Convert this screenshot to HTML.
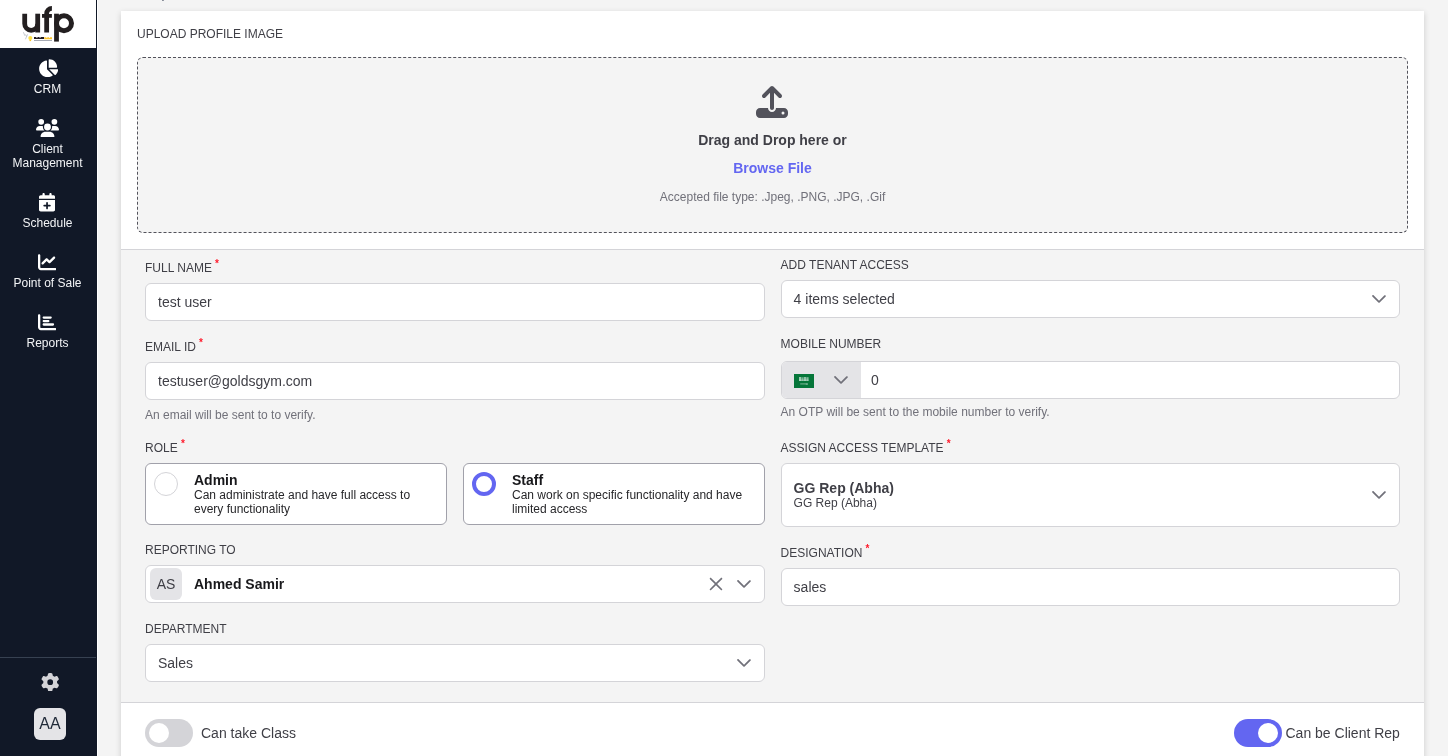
<!DOCTYPE html>
<html>
<head>
<meta charset="utf-8">
<title>Edit User</title>
<style>
*{box-sizing:border-box;margin:0;padding:0}
html,body{width:1448px;height:756px;overflow:hidden}
body{font-family:"Liberation Sans",sans-serif;background:#f4f4f4;color:#374151;position:relative}
.abs{position:absolute}
/* sidebar */
#side{position:absolute;left:0;top:0;width:97px;height:756px;background:#111827}
#sideline{position:absolute;left:97px;top:0;width:1px;height:756px;background:#fff}
#logo{position:absolute;left:0;top:0;width:96px;height:48px;background:#fff}
.nav{position:absolute;left:0;width:96px;text-align:center;color:#f3f4f6;font-size:12px;line-height:14px}
.nav svg{position:absolute;fill:#fff}
.navtxt{position:absolute;left:0;width:95px;text-align:center;color:#f3f4f6;font-size:12px;line-height:14px}
#sidehr{position:absolute;left:0;top:657px;width:96px;height:1px;background:#374151}
#avatar{position:absolute;left:34px;top:708px;width:32px;height:32px;border-radius:6px;background:#e4e4e7;color:#1f2937;font-size:16px;line-height:32px;text-align:center}
/* card */
#card{position:absolute;left:121px;top:11px;width:1303px;height:760px;background:#fff;box-shadow:0 2px 6px rgba(0,0,0,.17)}
#graysec{position:absolute;left:121px;top:249px;width:1303px;height:454px;background:#f4f4f4;border-top:1px solid #d4d4d8;border-bottom:1px solid #d4d4d8}
.lbl{position:absolute;font-size:12px;line-height:14px;color:#3f3f46;white-space:nowrap}
.lbl i{font-style:normal;color:#ff1a2b;position:relative;top:-5px;left:3.2px;font-size:10px;font-weight:bold}
.inp{position:absolute;height:38px;background:#fff;border:1px solid #d4d4d8;border-radius:6px;font-size:14px;line-height:36px;padding-left:12px;color:#3f3f46;white-space:nowrap}
.help{position:absolute;font-size:12px;line-height:14px;color:#71717a;white-space:nowrap}
.chev{position:absolute}
#drop{position:absolute;left:137px;top:57px;width:1271px;height:176px;border:1px dashed #52525b;border-radius:6px;background:#f4f4f4}
.ctr{position:absolute;left:137px;width:1271px;text-align:center;white-space:nowrap}
.rcard{position:absolute;top:463px;width:302px;height:62px;background:#fff;border:1px solid #a1a1aa;border-radius:6px}
.rcard b{position:absolute;left:48px;top:8px;font-size:14px;line-height:16px;color:#18181b}
.rcard span{position:absolute;left:48px;top:24px;font-size:12px;line-height:14px;color:#27272a;width:250px}
</style>
</head>
<body>
<div id="root" style="position:absolute;left:0;top:0;width:1448px;height:756px;will-change:transform">
<div id="side"></div>
<div id="sideline"></div>
<div id="logo"></div>
<div id="sidehr"></div>
<svg class="abs" style="left:0;top:0" width="96" height="48" viewBox="0 0 96 48">
 <g fill="none" stroke="#231f20" stroke-width="4.8">
  <path d="M24.7 13.7V23.8A6.5 6.5 0 0 0 37.7 23.8"/>
  <path d="M37.7 13.7V32.5"/>
  <path d="M46.65 32.4V13.6A5.2 5.2 0 0 1 51.9 8.4"/>
  <path d="M56.5 13.7V41.6"/>
  <circle cx="64" cy="23.2" r="7.5" stroke-width="5"/>
 </g>
 <rect x="42" y="14" width="9.9" height="3.8" fill="#231f20"/>
 <defs><filter id="bl" x="-20%" y="-50%" width="140%" height="200%"><feGaussianBlur stdDeviation=".35"/></filter></defs>
 <g filter="url(#bl)">
 <path d="M23.4 32.2l1.5 3.6M25.6 34.4l1 2.2M27.6 34.3l-2.2 5" stroke="#9ca3af" stroke-width=".7" fill="none" opacity=".8"/>
 <ellipse cx="30.3" cy="38.1" rx="2" ry="2.1" fill="#fde047"/>
 <rect x="29.5" y="40" width="1.6" height="1.1" fill="#fbbf24"/>
 <path d="M34 37h2.4v1h1v-1h2.2v1h.9v-1h3.5v2.1H34z" fill="#231f20"/>
 <path d="M44.2 37.3h2.2v.8h.8v-.8h2v.8h.8v-.8h2v2H44.2z" fill="#fbc52d"/>
 <rect x="34" y="40.1" width="18" height=".8" fill="#6b7280" opacity=".75"/>
 </g>
</svg>
<svg class="abs" style="left:37.5px;top:58.7px" width="20.25" height="18.4" viewBox="0 0 576 512"><path fill="#fff" d="M304 240V16.600c0-9 7-16.600 16-16.600C443.700 0 544 100.300 544 224c0 9-7.600 16-16.600 16H304zM32 272C32 150.700 122.100 50.300 239 34.300c9.200-1.300 17 6.100 17 15.400V288L412.500 444.500c6.700 6.700 6.200 17.700-1.500 23.100C371.800 495.600 323.800 512 272 512C139.500 512 32 404.600 32 272zm526.400 16c9.300 0 16.600 7.800 15.400 17c-7.700 55.900-34.600 105.600-73.900 142.300c-6 5.600-15.400 5.200-21.200-.7L320 288H558.400z"/></svg>
<svg class="abs" style="left:36.2px;top:118.5px" width="23" height="18.4" viewBox="0 0 640 512"><path fill="#fff" d="M144 0a80 80 0 1 1 0 160A80 80 0 1 1 144 0zM512 0a80 80 0 1 1 0 160A80 80 0 1 1 512 0zM0 298.700C0 239.800 47.800 192 106.700 192h42.700c15.900 0 31 3.500 44.600 9.700c-1.300 7.200-1.900 14.700-1.900 22.300c0 38.200 16.800 72.500 43.300 96c-.2 0-.4 0-.7 0H21.300C9.600 320 0 310.400 0 298.700zM405.300 320c-.2 0-.4 0-.7 0c26.600-23.500 43.300-57.800 43.300-96c0-7.600-.7-15-1.900-22.300c13.600-6.300 28.700-9.700 44.600-9.700h42.700C592.200 192 640 239.800 640 298.700c0 11.800-9.600 21.300-21.300 21.300H405.300zM224 224a96 96 0 1 1 192 0 96 96 0 1 1 -192 0zM128 485.300C128 411.700 187.700 352 261.300 352H378.700C452.300 352 512 411.700 512 485.300c0 14.700-11.900 26.700-26.700 26.700H154.700c-14.700 0-26.700-11.900-26.700-26.700z"/></svg>
<svg class="abs" style="left:39.4px;top:193.3px" width="16.1" height="18.4" viewBox="0 0 448 512"><path fill="#fff" d="M96 32V64H48C21.500 64 0 85.500 0 112v48H448V112c0-26.500-21.500-48-48-48H352V32c0-17.700-14.300-32-32-32s-32 14.300-32 32V64H160V32c0-17.700-14.300-32-32-32S96 14.300 96 32zM448 192H0V464c0 26.500 21.500 48 48 48H400c26.500 0 48-21.500 48-48V192zM224 248c13.300 0 24 10.700 24 24v56h56c13.300 0 24 10.700 24 24s-10.700 24-24 24H248v56c0 13.300-10.700 24-24 24s-24-10.700-24-24V376H144c-13.300 0-24-10.700-24-24s10.700-24 24-24h56V272c0-13.300 10.700-24 24-24z"/></svg>
<svg class="abs" style="left:38.1px;top:253.2px" width="18.4" height="18.4" viewBox="0 0 512 512"><path fill="#fff" d="M64 64c0-17.700-14.300-32-32-32S0 46.300 0 64V400c0 44.200 35.800 80 80 80H480c17.700 0 32-14.300 32-32s-14.300-32-32-32H80c-8.800 0-16-7.200-16-16V64zm406.600 86.600c12.500-12.500 12.500-32.800 0-45.300s-32.800-12.500-45.300 0L320 210.700l-57.400-57.400c-12.500-12.500-32.800-12.500-45.300 0l-112 112c-12.500 12.500-12.500 32.800 0 45.300s32.800 12.500 45.300 0L240 221.300l57.400 57.400c12.500 12.500 32.800 12.500 45.300 0l128-128z"/></svg>
<svg class="abs" style="left:38.1px;top:313.2px" width="18.4" height="18.4" viewBox="0 0 512 512"><path fill="#fff" d="M32 32c17.700 0 32 14.300 32 32V400c0 8.800 7.200 16 16 16H480c17.700 0 32 14.300 32 32s-14.300 32-32 32H80c-44.200 0-80-35.800-80-80V64C0 46.300 14.300 32 32 32zm96 96c0-17.700 14.300-32 32-32l192 0c17.700 0 32 14.300 32 32s-14.300 32-32 32l-192 0c-17.700 0-32-14.300-32-32zm32 64H288c17.700 0 32 14.300 32 32s-14.300 32-32 32H160c-17.700 0-32-14.300-32-32s14.300-32 32-32zm0 96H416c17.700 0 32 14.300 32 32s-14.300 32-32 32H160c-17.700 0-32-14.300-32-32s14.300-32 32-32z"/></svg>
<svg class="abs" style="left:40.7px;top:672.8px" width="18.4" height="18.4" viewBox="0 0 512 512"><path fill="#d4d4d8" d="M495.900 166.600c3.200 8.700 .5 18.400-6.400 24.600l-43.300 39.400c1.100 8.300 1.700 16.800 1.700 25.400s-.6 17.100-1.700 25.400l43.300 39.400c6.900 6.200 9.600 15.900 6.400 24.600c-4.400 11.900-9.700 23.300-15.800 34.300l-4.700 8.100c-6.600 11-14 21.400-22.100 31.200c-5.900 7.200-15.700 9.600-24.500 6.800l-55.700-17.700c-13.400 10.300-28.200 18.900-44 25.400l-12.500 57.100c-2 9.100-9 16.300-18.200 17.800c-13.800 2.300-28 3.500-42.500 3.500s-28.700-1.200-42.500-3.500c-9.200-1.500-16.200-8.700-18.200-17.800l-12.500-57.100c-15.800-6.500-30.600-15.100-44-25.400L83.100 425.900c-8.800 2.800-18.600 .3-24.500-6.800c-8.100-9.800-15.500-20.200-22.100-31.200l-4.700-8.100c-6.100-11-11.400-22.400-15.800-34.300c-3.200-8.700-.5-18.400 6.400-24.600l43.300-39.400C64.600 273.100 64 264.600 64 256s.6-17.100 1.700-25.400L22.400 191.200c-6.900-6.200-9.600-15.900-6.400-24.600c4.400-11.900 9.700-23.300 15.800-34.300l4.700-8.100c6.600-11 14-21.400 22.100-31.200c5.900-7.200 15.700-9.600 24.500-6.800l55.700 17.700c13.400-10.300 28.200-18.900 44-25.400l12.500-57.100c2-9.100 9-16.300 18.200-17.800C227.300 1.200 241.500 0 256 0s28.700 1.200 42.500 3.500c9.200 1.500 16.200 8.700 18.200 17.800l12.500 57.100c15.800 6.500 30.600 15.100 44 25.400l55.700-17.700c8.800-2.800 18.600-.3 24.500 6.800c8.100 9.800 15.500 20.200 22.100 31.200l4.700 8.100c6.100 11 11.400 22.400 15.800 34.300zM256 336a80 80 0 1 0 0-160 80 80 0 1 0 0 160z"/></svg>


<div class="navtxt" style="top:82px">CRM</div>
<div class="navtxt" style="top:142px">Client<br>Management</div>
<div class="navtxt" style="top:216px">Schedule</div>
<div class="navtxt" style="top:276px">Point of Sale</div>
<div class="navtxt" style="top:336px">Reports</div>
<div id="avatar">AA</div>

<div class="abs" style="left:161.6px;top:-1px;width:2.2px;height:2.4px;background:#6b7280;border-radius:0 0 1px 1.5px;transform:skewX(-20deg)"></div>
<div id="card"></div>
<div class="lbl" style="left:137px;top:27px">UPLOAD PROFILE IMAGE</div>
<div id="drop"></div>
<div class="ctr" style="top:132px;font-size:14px;line-height:16px;font-weight:bold;color:#3f3f46">Drag and Drop here or</div>
<div class="ctr" style="top:160px;font-size:14px;line-height:16px;font-weight:bold;color:#6366f1">Browse File</div>
<div class="ctr" style="top:190px;font-size:12px;line-height:14px;color:#71717a">Accepted file type: .Jpeg, .PNG, .JPG, .Gif</div>

<div id="graysec"></div>

<!-- left column -->
<div class="lbl" style="left:145px;top:261px">FULL NAME<i>*</i></div>
<div class="inp" style="left:145px;top:283px;width:620px">test user</div>
<div class="lbl" style="left:145px;top:340px">EMAIL ID<i>*</i></div>
<div class="inp" style="left:145px;top:362px;width:620px">testuser@goldsgym.com</div>
<div class="help" style="left:145px;top:408px">An email will be sent to to verify.</div>
<div class="lbl" style="left:145px;top:441px">ROLE<i>*</i></div>
<div class="rcard" style="left:145px"><b>Admin</b><span>Can administrate and have full access to<br>every functionality</span></div>
<div class="rcard" style="left:463px"><b>Staff</b><span>Can work on specific functionality and have limited access</span></div>
<div class="lbl" style="left:145px;top:543px">REPORTING TO</div>
<div class="inp" style="left:145px;top:565px;width:620px"></div>
<div class="lbl" style="left:145px;top:622px">DEPARTMENT</div>
<div class="inp" style="left:145px;top:644px;width:620px">Sales</div>

<!-- right column -->
<div class="lbl" style="left:780.6px;top:258px">ADD TENANT ACCESS</div>
<div class="inp" style="left:781px;top:280px;width:619px;padding-left:11.6px">4 items selected</div>
<div class="lbl" style="left:780.6px;top:337px">MOBILE NUMBER</div>
<div class="inp" style="left:781px;top:361px;width:619px;padding-left:89px">0</div>
<div class="help" style="left:780.6px;top:405px">An OTP will be sent to the mobile number to verify.</div>
<div class="lbl" style="left:780.6px;top:441px">ASSIGN ACCESS TEMPLATE<i>*</i></div>
<div class="inp" style="left:781px;top:463px;width:619px;height:64px"></div>
<div class="lbl" style="left:780.6px;top:546px">DESIGNATION<i>*</i></div>
<div class="inp" style="left:781px;top:568px;width:619px;padding-left:11.6px">sales</div>


<!-- phone prefix -->
<div class="abs" style="left:782px;top:362px;width:79px;height:36px;background:#e4e4e7;border-radius:5px 0 0 5px"></div>
<!-- upload icon -->
<svg class="abs" style="left:755.9px;top:85.9px" width="32" height="32" viewBox="0 0 512 512"><path fill="#52525b" d="M288 109.300V352c0 17.700-14.300 32-32 32s-32-14.300-32-32V109.300l-73.400 73.400c-12.500 12.500-32.800 12.500-45.300 0s-12.500-32.800 0-45.300l128-128c12.500-12.500 32.800-12.500 45.300 0l128 128c12.500 12.500 12.500 32.800 0 45.300s-32.800 12.500-45.300 0L288 109.300zM64 352H192c0 35.300 28.700 64 64 64s64-28.700 64-64H448c35.300 0 64 28.700 64 64v32c0 35.300-28.700 64-64 64H64c-35.300 0-64-28.700-64-64V416c0-35.300 28.700-64 64-64zM432 456a24 24 0 1 0 0-48 24 24 0 1 0 0 48z"/></svg>
<svg class="abs" style="left:1371px;top:291px" width="16" height="16" viewBox="0 0 14 14"><path fill="#71717a" d="M7.01744 10.398C6.91269 10.3985 6.8089 10.378 6.71215 10.3379C6.61541 10.2977 6.52766 10.2386 6.45405 10.1641L1.13907 4.84913C1.03306 4.69404 0.985221 4.5065 1.00399 4.31958C1.02276 4.13266 1.10693 3.95838 1.24166 3.82747C1.37639 3.69655 1.55301 3.61742 1.74039 3.60402C1.92777 3.59062 2.11386 3.64382 2.26584 3.75424L7.01744 8.47394L11.769 3.75424C11.9189 3.65709 12.097 3.61306 12.2748 3.62921C12.4527 3.64535 12.6199 3.72073 12.7498 3.84328C12.8797 3.96582 12.9647 4.12842 12.9912 4.30502C13.0177 4.48162 12.9841 4.662 12.8958 4.81724L7.58083 10.1322C7.50996 10.2125 7.42344 10.2775 7.32656 10.3232C7.22968 10.3689 7.12449 10.3944 7.01744 10.398Z"/></svg><svg class="abs" style="left:833px;top:372px" width="16" height="16" viewBox="0 0 14 14"><path fill="#71717a" d="M7.01744 10.398C6.91269 10.3985 6.8089 10.378 6.71215 10.3379C6.61541 10.2977 6.52766 10.2386 6.45405 10.1641L1.13907 4.84913C1.03306 4.69404 0.985221 4.5065 1.00399 4.31958C1.02276 4.13266 1.10693 3.95838 1.24166 3.82747C1.37639 3.69655 1.55301 3.61742 1.74039 3.60402C1.92777 3.59062 2.11386 3.64382 2.26584 3.75424L7.01744 8.47394L11.769 3.75424C11.9189 3.65709 12.097 3.61306 12.2748 3.62921C12.4527 3.64535 12.6199 3.72073 12.7498 3.84328C12.8797 3.96582 12.9647 4.12842 12.9912 4.30502C13.0177 4.48162 12.9841 4.662 12.8958 4.81724L7.58083 10.1322C7.50996 10.2125 7.42344 10.2775 7.32656 10.3232C7.22968 10.3689 7.12449 10.3944 7.01744 10.398Z"/></svg><svg class="abs" style="left:1371px;top:487px" width="16" height="16" viewBox="0 0 14 14"><path fill="#71717a" d="M7.01744 10.398C6.91269 10.3985 6.8089 10.378 6.71215 10.3379C6.61541 10.2977 6.52766 10.2386 6.45405 10.1641L1.13907 4.84913C1.03306 4.69404 0.985221 4.5065 1.00399 4.31958C1.02276 4.13266 1.10693 3.95838 1.24166 3.82747C1.37639 3.69655 1.55301 3.61742 1.74039 3.60402C1.92777 3.59062 2.11386 3.64382 2.26584 3.75424L7.01744 8.47394L11.769 3.75424C11.9189 3.65709 12.097 3.61306 12.2748 3.62921C12.4527 3.64535 12.6199 3.72073 12.7498 3.84328C12.8797 3.96582 12.9647 4.12842 12.9912 4.30502C13.0177 4.48162 12.9841 4.662 12.8958 4.81724L7.58083 10.1322C7.50996 10.2125 7.42344 10.2775 7.32656 10.3232C7.22968 10.3689 7.12449 10.3944 7.01744 10.398Z"/></svg><svg class="abs" style="left:736px;top:575.7px" width="16" height="16" viewBox="0 0 14 14"><path fill="#71717a" d="M7.01744 10.398C6.91269 10.3985 6.8089 10.378 6.71215 10.3379C6.61541 10.2977 6.52766 10.2386 6.45405 10.1641L1.13907 4.84913C1.03306 4.69404 0.985221 4.5065 1.00399 4.31958C1.02276 4.13266 1.10693 3.95838 1.24166 3.82747C1.37639 3.69655 1.55301 3.61742 1.74039 3.60402C1.92777 3.59062 2.11386 3.64382 2.26584 3.75424L7.01744 8.47394L11.769 3.75424C11.9189 3.65709 12.097 3.61306 12.2748 3.62921C12.4527 3.64535 12.6199 3.72073 12.7498 3.84328C12.8797 3.96582 12.9647 4.12842 12.9912 4.30502C13.0177 4.48162 12.9841 4.662 12.8958 4.81724L7.58083 10.1322C7.50996 10.2125 7.42344 10.2775 7.32656 10.3232C7.22968 10.3689 7.12449 10.3944 7.01744 10.398Z"/></svg><svg class="abs" style="left:736px;top:655px" width="16" height="16" viewBox="0 0 14 14"><path fill="#71717a" d="M7.01744 10.398C6.91269 10.3985 6.8089 10.378 6.71215 10.3379C6.61541 10.2977 6.52766 10.2386 6.45405 10.1641L1.13907 4.84913C1.03306 4.69404 0.985221 4.5065 1.00399 4.31958C1.02276 4.13266 1.10693 3.95838 1.24166 3.82747C1.37639 3.69655 1.55301 3.61742 1.74039 3.60402C1.92777 3.59062 2.11386 3.64382 2.26584 3.75424L7.01744 8.47394L11.769 3.75424C11.9189 3.65709 12.097 3.61306 12.2748 3.62921C12.4527 3.64535 12.6199 3.72073 12.7498 3.84328C12.8797 3.96582 12.9647 4.12842 12.9912 4.30502C13.0177 4.48162 12.9841 4.662 12.8958 4.81724L7.58083 10.1322C7.50996 10.2125 7.42344 10.2775 7.32656 10.3232C7.22968 10.3689 7.12449 10.3944 7.01744 10.398Z"/></svg><svg class="abs" style="left:708px;top:576px" width="16" height="16" viewBox="0 0 14 14"><path fill="#71717a" d="M8.01186 7.00933L12.27 2.75116C12.341 2.68501 12.398 2.60524 12.4375 2.51661C12.4769 2.42798 12.4982 2.3323 12.4999 2.23529C12.5016 2.13827 12.4838 2.0419 12.4474 1.95194C12.4111 1.86197 12.357 1.78024 12.2884 1.71163C12.2198 1.64302 12.138 1.58893 12.0481 1.55259C11.9581 1.51625 11.8617 1.4984 11.7647 1.50011C11.6677 1.50182 11.572 1.52306 11.4834 1.56255C11.3948 1.60204 11.315 1.65898 11.2488 1.72997L6.99067 5.98814L2.7325 1.72997C2.59553 1.60234 2.41437 1.53286 2.22718 1.53616C2.03999 1.53946 1.8614 1.61529 1.72901 1.74767C1.59663 1.88006 1.5208 2.05865 1.5175 2.24584C1.5142 2.43303 1.58368 2.61419 1.71131 2.75116L5.96948 7.00933L1.71131 11.2675C1.576 11.403 1.5 11.5866 1.5 11.7781C1.5 11.9696 1.576 12.1532 1.71131 12.2887C1.84679 12.424 2.03043 12.5 2.2219 12.5C2.41338 12.5 2.59702 12.424 2.7325 12.2887L6.99067 8.03052L11.2488 12.2887C11.3843 12.424 11.568 12.5 11.7594 12.5C11.9509 12.5 12.1346 12.424 12.27 12.2887C12.4053 12.1532 12.4813 11.9696 12.4813 11.7781C12.4813 11.5866 12.4053 11.403 12.27 11.2675L8.01186 7.00933Z"/></svg>
<!-- flag -->
<svg class="abs" style="left:794px;top:374px" width="20" height="14" viewBox="0 0 20 14"><rect width="20" height="14" fill="#05763a"/><g fill="#fff"><rect x="5" y="3" width="2.2" height="3.9" opacity=".6"/><rect x="7.5" y="3.3" width="2" height="3.6" opacity=".45"/><rect x="9.8" y="3" width="2.2" height="3.9" opacity=".55"/><rect x="12.3" y="3.2" width="2.3" height="3.7" opacity=".5"/><rect x="5" y="5.6" width="9.6" height="1.3" opacity=".35"/><rect x="6.2" y="9.3" width="7.6" height="1.2" opacity=".4"/><rect x="11.8" y="9.6" width="2" height="1.2" opacity=".3"/></g></svg>
<!-- radios -->
<div class="abs" style="left:154px;top:472px;width:24px;height:24px;border-radius:50%;border:1px solid #d4d4d8;background:#fff"></div>
<div class="abs" style="left:472px;top:472px;width:24px;height:24px;border-radius:50%;border:4px solid #6366f1;background:#fff"></div>
<!-- reporting to -->
<div class="abs" style="left:150px;top:568px;width:32px;height:32px;border-radius:6px;background:#e4e4e7;color:#3f3f46;font-size:14px;line-height:32px;text-align:center">AS</div>
<div class="abs" style="left:194px;top:576px;font-size:14px;line-height:16px;font-weight:bold;color:#18181b">Ahmed Samir</div>
<!-- template -->
<div class="abs" style="left:793.6px;top:480px;font-size:14px;line-height:16px;font-weight:bold;color:#3f3f46">GG Rep (Abha)</div>
<div class="abs" style="left:793.6px;top:496px;font-size:12px;line-height:14px;color:#3f3f46">GG Rep (Abha)</div>
<!-- toggles -->
<div class="abs" style="left:145px;top:719px;width:48px;height:28px;border-radius:14px;background:#d4d4d8"></div>
<div class="abs" style="left:149px;top:723px;width:20px;height:20px;border-radius:50%;background:#fff"></div>
<div class="abs" style="left:1234px;top:719px;width:48px;height:28px;border-radius:14px;background:#6366f1"></div>
<div class="abs" style="left:1258px;top:723px;width:20px;height:20px;border-radius:50%;background:#fff"></div>
<!-- toggle labels -->
<div class="abs" style="left:201px;top:725px;font-size:14px;line-height:16px;color:#3f3f46">Can take Class</div>
<div class="abs" style="left:1285.5px;top:725px;font-size:14px;line-height:16px;color:#3f3f46">Can be Client Rep</div>
</div>
</body>
</html>
